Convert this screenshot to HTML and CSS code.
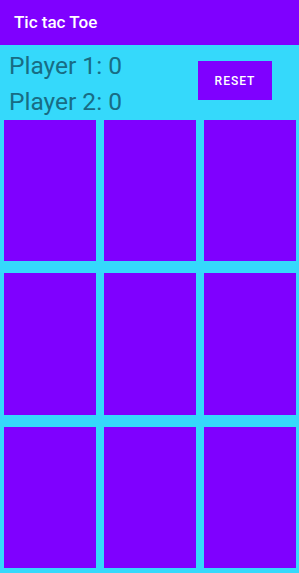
FILE: index.html
```html
<!DOCTYPE html>
<html>
<head>
<meta charset="utf-8">
<link rel="stylesheet" href="styles.css">
</head>
<body>
<div class="app">
  <header class="appbar"><span class="title">Tic tac Toe</span></header>
  <section class="scores">
    <div class="players">
      <div class="player">Player 1: 0</div>
      <div class="player">Player 2: 0</div>
    </div>
    <button class="reset">RESET</button>
  </section>
  <main class="board">
    <div class="cell"></div><div class="cell"></div><div class="cell"></div>
    <div class="cell"></div><div class="cell"></div><div class="cell"></div>
    <div class="cell"></div><div class="cell"></div><div class="cell"></div>
  </main>
</div>
</body>
</html>
```
FILE: styles.css
```css
html, body {
  margin: 0;
  padding: 0;
}
body {
  width: 299px;
  height: 573px;
  overflow: hidden;
  font-family: Roboto, "Liberation Sans", sans-serif;
  background: #35d9fb;
}
.app {
  display: flex;
  flex-direction: column;
  height: 573px;
}
.appbar {
  height: 45px;
  flex: 0 0 45px;
  background: #7f00ff;
  display: flex;
  align-items: center;
  padding-left: 14px;
}
.title {
  color: #ffffff;
  font-size: 17px;
  font-weight: 500;
  margin-top: -1px;
}
.scores {
  flex: 0 0 75px;
  height: 75px;
  display: flex;
  align-items: flex-start;
  justify-content: space-between;
  padding: 0 27px 0 9px;
  box-sizing: border-box;
  overflow: hidden;
}
.players {
  display: flex;
  flex-direction: column;
  padding-top: 3px;
}
.player {
  font-size: 24.5px;
  line-height: 36px;
  color: #186c84;
}
.reset {
  margin-top: 16px;
  width: 74px;
  height: 39px;
  border: none;
  background: #7f00ff;
  color: #ffffff;
  font-family: Roboto, "Liberation Sans", sans-serif;
  font-weight: 500;
  font-size: 12px;
  letter-spacing: 1px;
  padding: 0;
}
.board {
  flex: 1;
  display: grid;
  grid-template-columns: 92px 92px 92px;
  grid-template-rows: 1fr 1fr 1fr;
  column-gap: 8px;
  row-gap: 12px;
  padding: 0 3px 5px 4px;
}
.cell {
  background: #7f00ff;
}
```
